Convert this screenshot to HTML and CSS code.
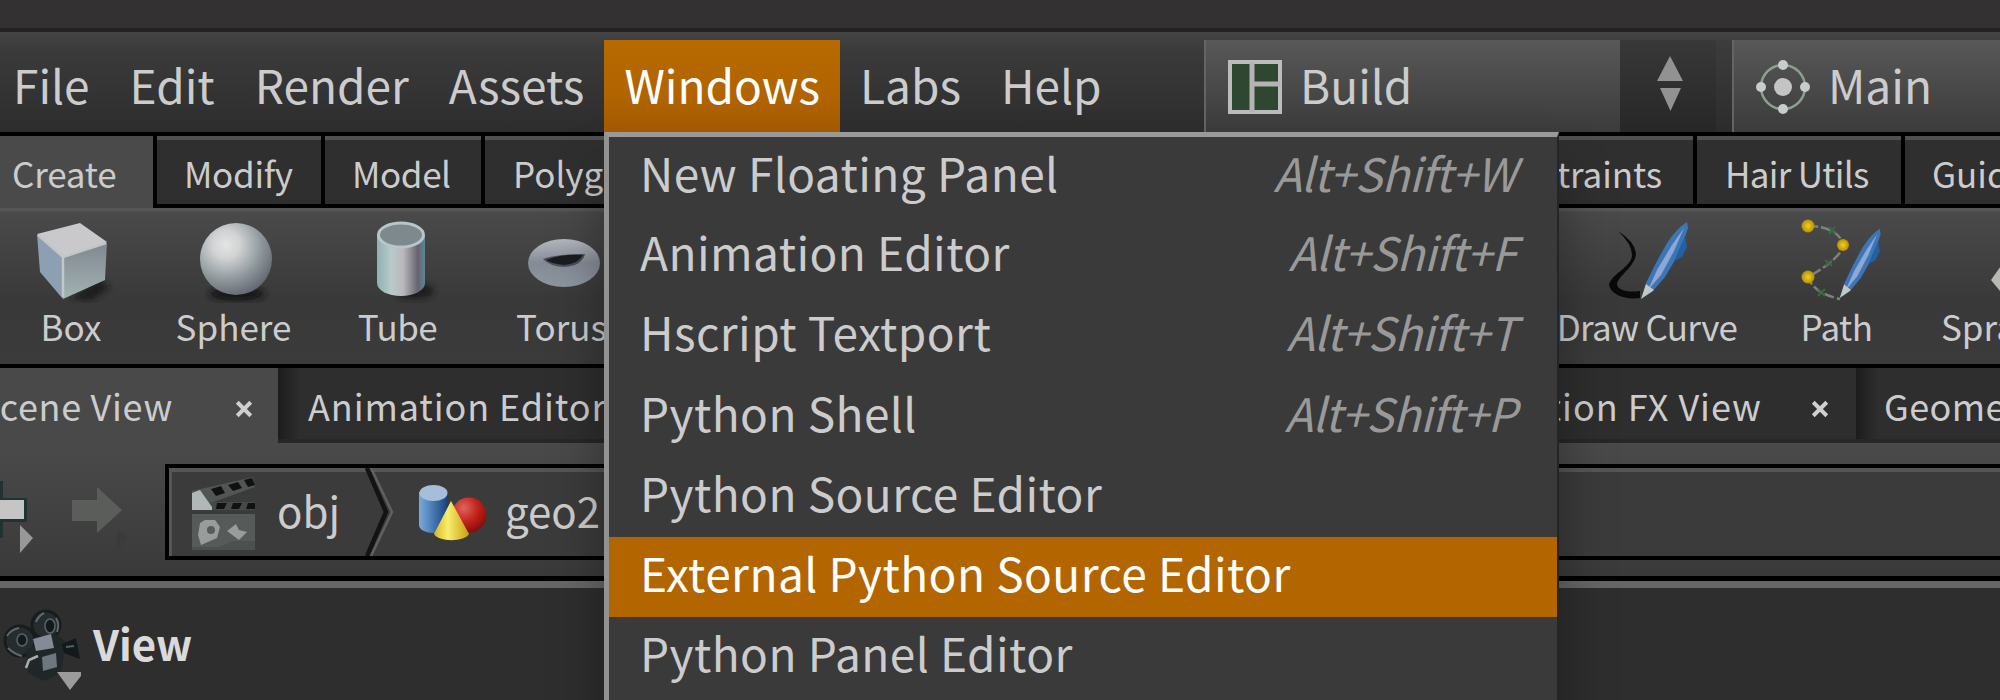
FILE: index.html
```html
<!DOCTYPE html>
<html lang="en">
<head>
<meta charset="utf-8">
<title>Build</title>
<link rel="stylesheet" href="styles.css">
</head>
<body>
<svg class="defs" width="0" height="0" aria-hidden="true">
  <defs>
    <radialGradient id="ball" cx=".36" cy=".3" r=".75"><stop offset="0" stop-color="#e4e4e4"/><stop offset=".25" stop-color="#d2d3d4"/><stop offset=".65" stop-color="#8f999d"/><stop offset="1" stop-color="#62656f"/></radialGradient>
    <linearGradient id="tube"><stop offset="0" stop-color="#8fb0b4"/><stop offset=".3" stop-color="#b9cbca"/><stop offset=".55" stop-color="#b9b7bb"/><stop offset=".85" stop-color="#66636f"/><stop offset="1" stop-color="#5e8792"/></linearGradient>
    <linearGradient id="ring" x2="0" y2="1"><stop offset="0" stop-color="#b4b8bf"/><stop offset=".5" stop-color="#858b96"/><stop offset="1" stop-color="#8d979f"/></linearGradient>
    <linearGradient id="blue"><stop offset="0" stop-color="#7ea9d4"/><stop offset=".3" stop-color="#5b8dc6"/><stop offset="1" stop-color="#163f78"/></linearGradient>
    <radialGradient id="red" cx=".35" cy=".3" r=".8"><stop offset="0" stop-color="#e0655b"/><stop offset=".5" stop-color="#c2231d"/><stop offset="1" stop-color="#7d0906"/></radialGradient>
    <linearGradient id="cone"><stop offset="0" stop-color="#d8b81e"/><stop offset=".4" stop-color="#f7ee6c"/><stop offset="1" stop-color="#c99f10"/></linearGradient>
    <radialGradient id="dot"><stop offset="0" stop-color="#f0d21c"/><stop offset="1" stop-color="#b78d08"/></radialGradient>
    <linearGradient id="side" x2="0" y2="1"><stop offset="0" stop-color="#80878f"/><stop offset="1" stop-color="#a3b3b3"/></linearGradient>
    <filter id="soft" x="-50%" y="-50%" width="200%" height="200%"><feGaussianBlur stdDeviation="3"/></filter>
    <g id="pen">
      <path d="M3 78 7 63 17 43 28 23Q38 8 48 2L49 8 45 20 36 40 26 57 13 72Z" fill="#3d76b6"/>
      <path d="M46 16 48 27 43 37 35 41Z" fill="#2460a5"/>
      <path d="M9 70 18 50 33 25 45 8 35 31 22 55Z" fill="#8ba9d4"/>
      <path d="M2 79 7 64 15 70Z" fill="#c3c8c4"/>
    </g>
  </defs>
</svg>

<div class="app">
  <div class="titlebar"></div>

  <header class="menubar">
    <nav class="menus">
      <span class="menu">File</span><span class="menu">Edit</span><span class="menu">Render</span><span class="menu">Assets</span><span class="menu open">Windows</span><span class="menu">Labs</span><span class="menu">Help</span>
    </nav>
    <div class="desktop">
      <svg width="54" height="54" viewBox="0 0 54 54"><rect x="2" y="2" width="50" height="50" fill="#2f4630" stroke="#bcbcbc" stroke-width="4"/><path d="M24 2v50M24 24h28" stroke="#b4b4b4" stroke-width="5"/></svg>
      <span>Build</span>
    </div>
    <div class="spinner">
      <svg width="26" height="56" viewBox="0 0 26 56"><path d="M13 0 26 25H0ZM3 32h21L13.500 55Z" fill="#929292"/></svg>
    </div>
    <div class="desktop main">
      <svg width="54" height="54" viewBox="0 0 54 54"><circle cx="27" cy="27" r="22" fill="none" stroke="#8aa28c" stroke-width="2.5"/><circle cx="27" cy="27" r="9" fill="#c4c4c4"/><g fill="#c9cccc"><circle cx="27" cy="5" r="5"/><circle cx="27" cy="49" r="5"/><circle cx="5" cy="27" r="5"/><circle cx="49" cy="27" r="5"/></g></svg>
      <span>Main</span>
    </div>
  </header>

  <div class="shelf-tabs">
    <span class="stab create">Create</span><span class="stab modify">Modify</span><span class="stab model">Model</span><span class="stab poly">Polygon</span>
    <span class="stab constraints">Constraints</span><span class="stab hair">Hair Utils</span><span class="stab guide">Guide Process</span>
  </div>

  <div class="shelf">
    <div class="tool box">
      <svg width="90" height="86" viewBox="0 0 90 86"><path d="M45 82 72 62 84 70 65 84Z" fill="#1f1f1f" filter="url(#soft)"/><path d="M11 17 54 6 81 25 37 40Z" fill="#c9c9cb"/><path d="M11 17 37 40 37 82 14 55Z" fill="#8da0b2"/><path d="M37 40 81 25 79 63 37 82Z" fill="url(#side)"/><path d="M12 18 37 40V80M37 40 80 26" fill="none" stroke="#c3c6c8" stroke-width="2.5"/></svg>
      <span>Box</span>
    </div>
    <div class="tool sphere">
      <svg width="90" height="86" viewBox="0 0 90 86"><ellipse cx="46" cy="77" rx="28" ry="7" fill="#151515" filter="url(#soft)"/><circle cx="45" cy="42" r="36" fill="url(#ball)"/></svg>
      <span>Sphere</span>
    </div>
    <div class="tool tube">
      <svg width="90" height="86" viewBox="0 0 90 86"><ellipse cx="58" cy="74" rx="20" ry="8" fill="#1c1c1c" filter="url(#soft)"/><path d="M21 18V66A24 13 0 0 0 69 66V18Z" fill="url(#tube)"/><ellipse cx="45" cy="18" rx="22.5" ry="12" fill="#7d898d" stroke="#b6c6cb" stroke-width="3"/></svg>
      <span>Tube</span>
    </div>
    <div class="tool torus">
      <svg width="90" height="86" viewBox="0 0 90 86"><ellipse cx="45" cy="46" rx="36" ry="24" fill="url(#ring)"/><path d="M24 42Q38 37 66 37 63 49 45 50 30 49 24 42Z" fill="#4a4f58"/><path d="M27 43Q42 37 64 38 59 47 45 48 33 47 27 43Z" fill="#1b1c1f"/></svg>
      <span>Torus</span>
    </div>
    <div class="tool curve">
      <svg width="90" height="86" viewBox="0 0 90 86"><path d="M20 14Q34 27 34 38C34 50 13 57 11 68 13 78 28 83 42 81V74C30 76 19 73 19 67 20 59 38 49 38 36Q36 24 20 14Z" fill="#090909"/><use href="#pen" x="41" y="3"/></svg>
      <span>Draw Curve</span>
    </div>
    <div class="tool path">
      <svg width="90" height="86" viewBox="0 0 90 86"><path d="M14 9Q43 9 50 28 45 43 14 60 19 76 46 82" fill="none" stroke="#7d827b" stroke-width="2.5" stroke-dasharray="10 3"/><g fill="none" stroke="#3d6a3d" stroke-width="2"><path d="m35 10 6 7m0-7-6 7M31 43l7 6m0-6-7 6M24 72l7 7m0-7-7 7"/></g><g fill="url(#dot)"><circle cx="14" cy="9" r="6.5"/><circle cx="49" cy="28" r="6"/><circle cx="14" cy="60" r="6.5"/></g><use href="#pen" transform="translate(44 10) scale(.87 .9)"/></svg>
      <span>Path</span>
    </div>
    <div class="tool spray">
      <svg width="90" height="86" viewBox="0 0 90 86"><path d="M0 63 12 46H50V80H14Z" fill="#b9b9b3"/></svg>
      <span>Spray Paint</span>
    </div>
  </div>

  <div class="pane-tabs">
    <div class="ptab scene"><span>Scene View</span><svg class="x" viewBox="0 0 16 16"><path d="m2 2 12 12M14 2 2 14" stroke="#d0d0d0" stroke-width="3.500"/></svg></div>
    <div class="ptab anim"><span>Animation Editor</span></div>
    <div class="ptab motion"><span>Motion FX View</span><svg class="x" viewBox="0 0 16 16"><path d="m2 2 12 12M14 2 2 14" stroke="#d0d0d0" stroke-width="3.500"/></svg></div>
    <div class="ptab geom"><span>Geometry Spreadsheet</span></div>
  </div>

  <div class="pathbar">
    <svg class="nav" width="165" height="112" viewBox="0 0 165 112">
      <path d="M0 22H3V39H27V63H3V79H0Z" fill="#213232"/><path d="M0 41H24V60H0Z" fill="#c4c5c4"/><path d="M20 66 33 79 20 94Z" fill="#989898"/>
      <path d="M72 41H97V28L122 51 97 74V62H72Z" fill="#5b5d5b"/><path d="M117 70 128 79 117 92Z" fill="#3b3b3b"/>
    </svg>
    <div class="crumbs">
      <svg class="clapper" width="66" height="74" viewBox="0 0 66 74">
        <path d="M1 14 62 0 64 10 3 32Z" fill="#515553"/><path d="M2 25H64V33H2Z" fill="#454a48"/><path d="M1 16 9 13 21 30V33H1Z" fill="#afb8b6"/>
        <path d="m20 12 10-3 4 7-9 3ZM37 8l10-3 4 6-9 3ZM53 3l8-2 3 7-7 2ZM26 26h10l-3 6h-8ZM42 26h9l-3 6h-8ZM57 26h7v6H55Z" fill="#111"/>
        <path d="M1 37H64V73H1Z" fill="#565b5a"/><path d="M9 46 14 43H24L29 50 26 61 10 68 7 58ZM36 54l9-7 3 6 8 2-8 8Z" fill="#989c9b"/><circle cx="20" cy="53" r="4" fill="#565b5b"/><path d="M28 70 42 64H64V73H1V70Z" fill="#4c5150"/>
      </svg>
      <span class="obj">obj</span>
      <svg class="chev" width="30" height="88" viewBox="0 0 30 88"><path d="M6 0 27 44 6 88" fill="none" stroke="#606060" stroke-width="2.5"/><path d="M2 0 21 44 2 88" fill="none" stroke="#131313" stroke-width="4.5"/></svg>
      <svg class="shapes" width="70" height="60" viewBox="0 0 70 60"><path d="M1 8V41A14.500 8 0 0 0 30 41V8Z" fill="url(#blue)"/><ellipse cx="15.500" cy="9" rx="14" ry="8" fill="#a7bedb"/><circle cx="51" cy="31" r="17.500" fill="url(#red)"/><path d="M33 17 51 50A18 8 0 0 1 16 50Z" fill="url(#cone)"/></svg>
      <span class="geo">geo2</span>
    </div>
  </div>

  <div class="viewbar">
    <svg width="84" height="96" viewBox="0 0 84 96">
      <g fill="#272d2e" stroke="#171d1e" stroke-width="3"><circle cx="20" cy="37" r="15"/><circle cx="46" cy="21" r="14"/></g>
      <g fill="none" stroke="#5f696c" stroke-width="2"><path d="M7 32A17 17 0 0 1 19 24M36 18A17 17 0 0 1 44 9M8 44Q14 50 22 52M56 14Q60 20 57 28"/></g>
      <g fill="#141a1b" stroke="#56656a" stroke-width="1.500"><ellipse cx="22" cy="36" rx="5" ry="6"/><ellipse cx="50" cy="22" rx="5" ry="7"/></g>
      <path d="M26 46 56 30 66 38 61 69 45 77 28 69Z" fill="#202728"/><path d="M33 35 51 30 54 44 36 47Z" fill="#858a97"/><path d="M42 53 56 49 57 63 43 67Z" fill="#6c7780"/><path d="M26 64 29 56 38 52" fill="none" stroke="#a8adad" stroke-width="2.5"/><path d="M62 40 76 34 80 55 64 49Z" fill="#13191a"/><path d="M66 43 74 42" stroke="#4d6267" stroke-width="2"/>
      <path d="M57 68H81V72L70 86Z" fill="#9b9b9b"/>
    </svg>
    <span>View</span>
  </div>

  <div class="popup">
    <div class="item"><span>New Floating Panel</span><kbd>Alt+Shift+W</kbd></div>
    <div class="item"><span>Animation Editor</span><kbd>Alt+Shift+F</kbd></div>
    <div class="item"><span>Hscript Textport</span><kbd>Alt+Shift+T</kbd></div>
    <div class="item"><span>Python Shell</span><kbd>Alt+Shift+P</kbd></div>
    <div class="item"><span>Python Source Editor</span></div>
    <div class="item active"><span>External Python Source Editor</span></div>
    <div class="item"><span>Python Panel Editor</span></div>
  </div>
</div>
</body>
</html>
```
FILE: styles.css
```css
* { box-sizing: border-box; }
body { margin: 0; background: #2e2e2e; }
.defs { position: absolute; }
.app {
  position: relative;
  width: 2000px;
  height: 700px;
  overflow: hidden;
  display: flex;
  flex-direction: column;
  font-family: "Noto Sans CJK SC", "Noto Sans", sans-serif;
  color: #cccccc;
  white-space: nowrap;
}
.app > div, .app > header { flex: none; }
svg { display: block; flex: none; }

.titlebar { height: 32px; background: #333132; border-bottom: 4px solid #232323; }

.menubar {
  height: 104px;
  display: flex;
  padding-top: 8px;
  background: linear-gradient(#444444, #3a3a3a 20%, #2d2d2d);
  border-bottom: 4px solid #000;
  font-size: 46px;
  line-height: 88px;
}
.menus { display: flex; width: 1204px; }
.menu { padding: 0 20px; height: 92px; }
.menu:first-child { padding-left: 13px; }
.menu.open { color: #fff; background: linear-gradient(#b86a00, #b16400 60%, #a45b00); }
.desktop {
  display: flex;
  width: 416px;
  height: 92px;
  padding-left: 22px;
  gap: 18px;
  background: linear-gradient(#585858, #3b3b3b);
  border-left: 2px solid #646464;
}
.desktop svg { margin-top: 20px; }
.spinner { width: 112px; padding: 16px 0 0 37px; background: linear-gradient(90deg, transparent 96px, rgba(255, 255, 255, .025) 96px), linear-gradient(#383838, #272727); }
.main { width: 268px; }

.shelf-tabs { height: 72px; display: flex; font-size: 35px; line-height: 66px; background: #000; }
.stab { height: 68px; background: #2f2f2f; border-top: 4px solid #505050; margin-right: 4px; overflow: hidden; flex: none; }
.create { width: 153px; height: 72px; padding-left: 12px; background: #4a4a4a; border-color: #4a4a4a; letter-spacing: -.2px; }
.modify { width: 164px; padding-left: 27px; letter-spacing: -.3px; }
.model { width: 156px; padding-left: 27px; letter-spacing: -.4px; }
.poly { width: 200px; padding-left: 28px; }
.constraints { width: 240px; margin-left: auto; padding-right: 31px; text-align: right; letter-spacing: -.1px; }
.hair { width: 204px; padding-left: 28px; letter-spacing: -.7px; }
.guide { width: 95px; margin-right: 0; padding-left: 27px; }

.shelf {
  height: 160px;
  display: flex;
  background: linear-gradient(#555 0, #555 3px, #4a4a4a 4px, #393939 60%, #3b3b3b);
  border-bottom: 4px solid #000;
  font-size: 35px;
  line-height: 45px;
}
.tool { flex: none; display: flex; flex-direction: column; align-items: center; padding-top: 9px; }
.tool svg { height: 86px; }
.box { width: 140px; margin-left: 1px; }
.sphere { width: 185px; }
.sphere svg { margin-left: 4px; }
.tube { width: 143px; letter-spacing: -.5px; }
.tube svg { margin-left: 6px; }
.torus { width: 185px; }
.torus svg { margin-left: 4px; }
.curve { width: 200px; margin-left: auto; letter-spacing: -.7px; }
.curve svg { margin-right: 8px; }
.path { width: 177px; letter-spacing: -.5px; }
.path span { margin-left: 2px; }
.path svg { margin-left: 6px; }
.spray { width: 76px; align-items: flex-start; padding-left: 17px; }
.spray svg { margin-left: 50px; }

.pane-tabs { height: 75px; display: flex; font-size: 36px; line-height: 75px; background: #2e2e2e; }
.ptab { display: flex; overflow: hidden; flex: none; border-bottom: 4px solid #272727; background: linear-gradient(90deg, #1c1c1c, #2e2e2e 22px); }
.ptab .x { width: 18px; height: 18px; margin-top: 32px; }
.scene { width: 278px; background: #494949; border-color: #494949; justify-content: flex-end; padding-right: 25px; gap: 62px; letter-spacing: .7px; }
.anim { width: 400px; padding-left: 30px; letter-spacing: .9px; }
.motion { width: 420px; margin-left: auto; justify-content: flex-end; padding-right: 27px; gap: 49px; letter-spacing: 1px; }
.geom { width: 144px; padding-left: 28px; letter-spacing: .4px; }

.pathbar { height: 145px; display: flex; background: linear-gradient(#4a4a4a, #393939); border-bottom: 7px solid #666; box-shadow: inset 0 -5px #000; }
.nav { margin-top: 16px; }
.crumbs {
  width: 1900px;
  height: 96px;
  margin-top: 21px;
  display: flex;
  flex: none;
  border: 4px solid #000;
  background: #3b3b3b;
  box-shadow: inset 3px 4px #565656;
  font-size: 42px;
  line-height: 84px;
}
.clapper { margin: 9px 0 0 22px; }
.obj { width: 88px; margin-left: 20px; }
.shapes { margin: 16px 0 0 23px; }
.geo { margin-left: 17px; }

.viewbar { height: 112px; display: flex; font-size: 42px; font-weight: 700; line-height: 110px; color: #dadada; background: #2e2e2e; }
.viewbar svg { margin-top: 16px; }
.viewbar span { margin-left: 9px; }

.popup {
  position: absolute;
  left: 604px;
  top: 132px;
  width: 955px;
  height: 600px;
  background: #3a3a3a;
  border: solid;
  border-width: 5px 2px 0 5px;
  border-color: #999 #252525 #999 #929292;
  box-shadow: 0 40px 50px rgba(0, 0, 0, .35);
  font-size: 46px;
  line-height: 70px;
}
.item { height: 80.300px; padding: 0 41px 0 31px; display: flex; justify-content: space-between; letter-spacing: .44px; }
.item:first-child { height: 79px; }
.item kbd { font: inherit; font-style: italic; color: #999; letter-spacing: -.7px; }
.item.active { background: #b36500; color: #fff; }
```
